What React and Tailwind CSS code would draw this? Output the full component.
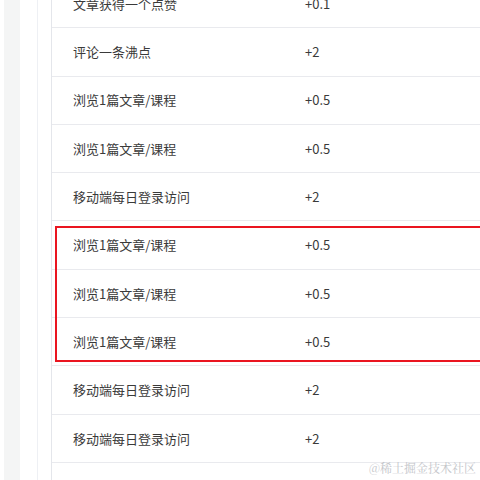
import React from 'react'

const rows = [
  { name: '文章获得一个点赞', score: '+0.1' },
  { name: '评论一条沸点', score: '+2' },
  { name: '浏览1篇文章/课程', score: '+0.5' },
  { name: '浏览1篇文章/课程', score: '+0.5' },
  { name: '移动端每日登录访问', score: '+2' },
  { name: '浏览1篇文章/课程', score: '+0.5' },
  { name: '浏览1篇文章/课程', score: '+0.5' },
  { name: '浏览1篇文章/课程', score: '+0.5' },
  { name: '移动端每日登录访问', score: '+2' },
  { name: '移动端每日登录访问', score: '+2' },
  { name: '', score: '' },
]

export default function App() {
  return (
    <div className="w-[480px] h-[480px] overflow-hidden bg-white flex relative" style={{ fontFamily: '"Microsoft YaHei", "Noto Sans CJK SC", sans-serif' }}>
      <div className="w-[4px] shrink-0 bg-white"></div>
      <div className="w-[16px] shrink-0 bg-[#f4f5f5]"></div>
      <div className="w-[17px] shrink-0 bg-white"></div>
      <div className="w-[1px] shrink-0 bg-[#eef0f4]"></div>
      <div className="w-[13px] shrink-0 bg-white"></div>

      <div className="flex-1 border-l border-[#e4e6eb] relative overflow-hidden">
        <div className="mt-[-20px]">
          {rows.map((r, i) => (
            <div key={i} className="grid grid-cols-[232px_1fr] items-center h-[48.3px] border-b border-[#e9eaee] text-[13px] text-[#3a3a3a]">
              <div className="pl-[21px]">{r.name}</div>
              <div className="pl-[21px]">{r.score}</div>
            </div>
          ))}
        </div>
        <div className="absolute left-[3px] top-[226px] w-[480px] h-[136px] border-2 border-[#ea1520]"></div>
      </div>

      <div className="absolute right-[4px] bottom-[3px] text-[12px] text-[#c4c6ca]" style={{ fontFamily: '"Noto Serif CJK SC", "Noto Sans CJK SC", serif' }}>@稀土掘金技术社区</div>
    </div>
  )
}
